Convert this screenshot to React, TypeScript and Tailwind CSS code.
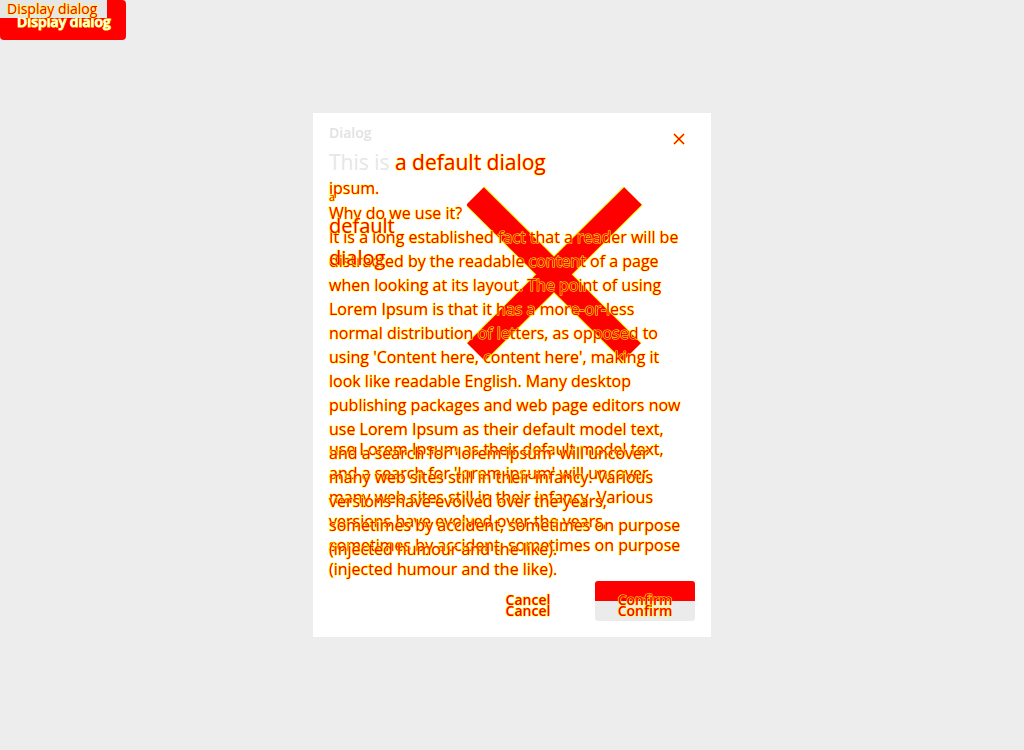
import React from "react";

const diff =
  "relative text-[#ff0000] [-webkit-text-stroke:1.1px_#ffff00] [paint-order:stroke_fill]";
const diffLight =
  "text-white [-webkit-text-stroke:1.1px_#ffff00] [paint-order:stroke_fill]";

const firstLines = [
  "It is a long established fact that a reader will be",
  "distracted by the readable content of a page",
  "when looking at its layout. The point of using",
  "Lorem Ipsum is that it has a more-or-less",
  "normal distribution of letters, as opposed to",
  "using 'Content here, content here', making it",
  "look like readable English. Many desktop",
  "publishing packages and web page editors now",
];

const tailLines = [
  "use Lorem Ipsum as their default model text,",
  "and a search for 'lorem ipsum' will uncover",
  "many web sites still in their infancy. Various",
  "versions have evolved over the years,",
  "sometimes by accident, sometimes on purpose",
  "(injected humour and the like).",
];

function BigCross() {
  return (
    <svg width="176" height="176" viewBox="0 0 176 176" fill="none">
      <g stroke="#ffff00" strokeWidth="27">
        <line x1="8" y1="10" x2="165" y2="166" />
        <line x1="166" y1="10" x2="9" y2="166" />
      </g>
      <g stroke="#ff0000" strokeWidth="25">
        <line x1="8" y1="10" x2="165" y2="166" />
        <line x1="166" y1="10" x2="9" y2="166" />
      </g>
    </svg>
  );
}

function SmallCross() {
  return (
    <svg width="14" height="14" viewBox="0 0 14 14" fill="none">
      <g stroke="#ffff00" strokeWidth="2.2">
        <line x1="2" y1="2" x2="12" y2="12" />
        <line x1="12" y1="2" x2="2" y2="12" />
      </g>
      <g stroke="#ff0000" strokeWidth="1.2">
        <line x1="2" y1="2" x2="12" y2="12" />
        <line x1="12" y1="2" x2="2" y2="12" />
      </g>
    </svg>
  );
}

export default function App() {
  return (
    <div className="min-h-screen w-full bg-[#ededed] font-['Open_Sans',sans-serif]">
      {/* trigger button */}
      <div className="grid w-[126px]">
        <button className="col-start-1 row-start-1 h-10 w-[126px] rounded-[4px] bg-[#ff0000] pl-[17px] pt-[3px] text-left text-sm font-semibold">
          <span className={diffLight}>Display dialog</span>
        </button>
        <div className="col-start-1 row-start-1 h-[18px] w-[107px] bg-[#e6e6e6] pl-[7px] text-sm leading-[18px]">
          <span className={diff}>Display dialog</span>
        </div>
      </div>

      {/* dialog */}
      <div className="fixed inset-0 flex items-center justify-center">
        <div className="relative flex h-[524px] w-[398px] flex-col bg-white px-4 pb-4 pt-[10px]">
          <div className="absolute left-[154px] top-[73px]">
            <BigCross />
          </div>

          <div className="relative flex items-start justify-between">
            <span className="text-sm font-semibold leading-5 text-[#e2e2e2]">Dialog</span>
            <span className="mr-[9px] mt-[9px]">
              <SmallCross />
            </span>
          </div>
          <h2 className="relative mt-[2px] text-[21px] leading-7">
            <span className="text-[#e6e6e6]">This is </span>
            <span className={diff}>a default dialog</span>
          </h2>

          {/* body */}
          <div className="grid h-[405px] text-base leading-6">
            <div className={`col-start-1 row-start-1 ${diff}`}>
              <p>ipsum.</p>
              <p className="mt-[1px]">Why do we use it?</p>
              <div className="mt-[212px]">
                {tailLines.map((l) => (
                  <p key={"b" + l}>{l}</p>
                ))}
              </div>
            </div>
            <div className={`col-start-1 row-start-1 pt-[49px] ${diff}`}>
              {firstLines.concat(tailLines).map((l) => (
                <p key={l}>{l}</p>
              ))}
            </div>
            <div className={`col-start-1 row-start-1 pt-[13px] ${diff}`}>
              <p className="text-[11px] leading-4">a</p>
              <p className="mt-[5px] text-[20px] leading-8">default</p>
              <p className="text-[20px] leading-8">dialog</p>
            </div>
          </div>

          {/* footer */}
          <div className="relative flex justify-end gap-[17px] text-sm font-semibold">
            <button className="grid h-10 w-[100px] text-center">
              <span className={`col-start-1 row-start-1 pt-[9px] leading-5 ${diff}`}>Cancel</span>
              <span className={`col-start-1 row-start-1 pt-5 leading-5 ${diff}`}>Cancel</span>
            </button>
            <button className="grid h-10 w-[100px] overflow-hidden rounded-[3px] text-center">
              <div className="col-start-1 row-start-1 flex flex-col">
                <div className="h-5 bg-[#ff0000]" />
                <div className="h-5 bg-[#ebebeb]" />
              </div>
              <span className={`col-start-1 row-start-1 pt-[9px] leading-5 ${diff}`}>Confirm</span>
              <span className={`col-start-1 row-start-1 pt-5 leading-5 ${diff}`}>Confirm</span>
            </button>
          </div>
        </div>
      </div>
    </div>
  );
}
